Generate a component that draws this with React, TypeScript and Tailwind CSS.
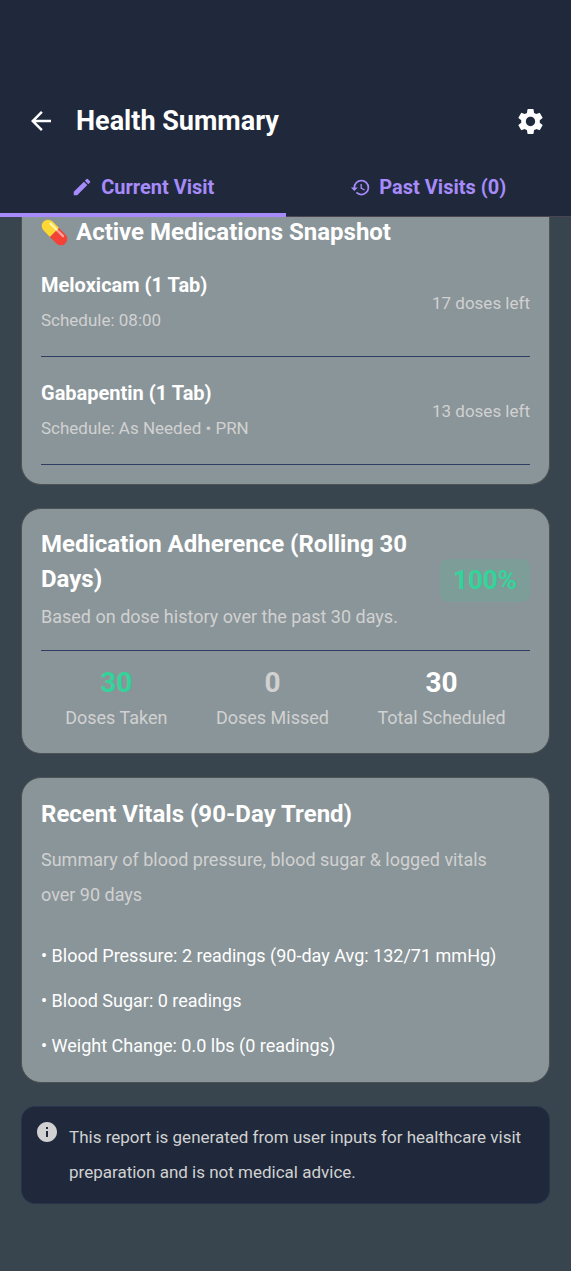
import { MdArrowBack, MdEdit, MdHistory, MdInfo, MdSettings } from "react-icons/md";

const medications = [
   { name: "Meloxicam (1 Tab)", schedule: "Schedule: 08:00", left: "17 doses left" },
   { name: "Gabapentin (1 Tab)", schedule: "Schedule: As Needed • PRN", left: "13 doses left" },
];

const stats = [
   { value: "30", label: "Doses Taken", color: "text-[#34d399]" },
   { value: "0", label: "Doses Missed", color: "text-[#d1d1d1]" },
   { value: "30", label: "Total Scheduled", color: "text-white" },
];

const vitals = [
   "• Blood Pressure: 2 readings (90-day Avg: 132/71 mmHg)",
   "• Blood Sugar: 0 readings",
   "• Weight Change: 0.0 lbs (0 readings)",
];

function PillIcon() {
   return (
      <svg viewBox="0 0 28 28" className="size-[27px] shrink-0" aria-hidden="true">
         <g transform="rotate(45 14 14)">
            <path d="M14 7.4H4.6a6.6 6.6 0 0 0 0 13.2H14z" fill="#fdd835" />
            <path d="M14 7.4h9.4a6.6 6.6 0 0 1 0 13.2H14z" fill="#f44336" />
            <path d="M4.5 10.4h9.5" stroke="#fff3b0" strokeWidth="2.4" strokeLinecap="round" />
            <path d="M15 10.4h8" stroke="#fba59d" strokeWidth="2.4" strokeLinecap="round" />
         </g>
      </svg>
   );
}

function Header() {
   return (
      <header className="bg-[#1f293b] pt-[86px]">
         <div className="flex h-[70px] items-center pl-[26px] pr-[25px]">
            <button type="button" aria-label="Back" className="text-white">
               <MdArrowBack className="size-[30px]" />
            </button>
            <h1 className="ml-5 flex-1 text-[27px] font-bold leading-9 text-white">
               Health Summary
            </h1>
            <button type="button" aria-label="Settings" className="text-white">
               <MdSettings className="size-[31px]" />
            </button>
         </div>
         <div role="tablist" className="flex h-[61px] border-b border-[#4a4453] text-xl font-bold text-[#a78bfa]">
            <button
               type="button"
               role="tab"
               aria-selected="true"
               className="-mb-px flex flex-1 items-center justify-center gap-2 border-b-4 border-[#a78bfa] pt-1"
            >
               <MdEdit className="size-[22px]" />
               Current Visit
            </button>
            <button
               type="button"
               role="tab"
               aria-selected="false"
               className="flex flex-1 items-center justify-center gap-2 pt-0.5"
            >
               <MdHistory className="size-[21px]" />
               Past Visits (0)
            </button>
         </div>
      </header>
   );
}

export default function App() {
   return (
      <div className="min-h-screen bg-[#38454f] font-['Roboto',sans-serif] text-lg leading-[35px] text-[#d1d1d1]">
         <Header />

         <main className="flex flex-col gap-[23px] px-[21px] pb-[67px]">
            <section className="rounded-b-[20px] border border-t-0 border-[#4d5254] bg-[#8a9599] px-[19px] pb-[19px]">
               <h2 className="flex items-center gap-2 text-2xl font-bold leading-[30px] text-white">
                  <PillIcon />
                  Active Medications Snapshot
               </h2>
               <div className="pt-0.5">
                  {medications.map((med) => (
                     <div
                        key={med.name}
                        className="flex items-center justify-between border-b border-[#2f3d62] pb-[18px] pt-[19px]"
                     >
                        <div>
                           <h3 className="text-xl font-bold leading-[35px] text-white">{med.name}</h3>
                           <p className="text-[17px] leading-[35px]">{med.schedule}</p>
                        </div>
                        <span className="text-[17px]">{med.left}</span>
                     </div>
                  ))}
               </div>
            </section>

            <section className="rounded-[20px] border border-[#4d5254] bg-[#8a9599] px-[19px] py-[18px]">
               <div className="flex items-center justify-between gap-6 border-b border-[#2f3d62] pb-4">
                  <div className="flex-1">
                     <h2 className="text-2xl font-bold leading-[35px] text-white">
                        Medication Adherence (Rolling 30 Days)
                     </h2>
                     <p className="mt-0.5">Based on dose history over the past 30 days.</p>
                  </div>
                  <span className="rounded-lg bg-[#34d399]/15 px-[13px] py-1 text-[26px] font-bold text-[#34d399]">
                     100%
                  </span>
               </div>
               <div className="flex justify-around pt-[15px] text-center">
                  {stats.map((stat) => (
                     <div key={stat.label}>
                        <p className={"text-[28px] font-bold leading-[34px] " + stat.color}>{stat.value}</p>
                        <p>{stat.label}</p>
                     </div>
                  ))}
               </div>
            </section>

            <section className="rounded-[20px] border border-[#4d5254] bg-[#8a9599] px-[19px] py-[19px]">
               <h2 className="text-2xl font-bold leading-[35px] text-white">Recent Vitals (90-Day Trend)</h2>
               <p className="mt-[10px] pr-4">
                  Summary of blood pressure, blood sugar & logged vitals over 90 days
               </p>
               <ul className="mt-[26px] flex flex-col gap-[10px] text-white">
                  {vitals.map((line) => (
                     <li key={line}>{line}</li>
                  ))}
               </ul>
            </section>

            <aside className="flex items-start gap-[10px] rounded-[14px] border border-[#26334a] bg-[#1f293b] px-[13px] py-[13px]">
               <MdInfo className="size-6 shrink-0" />
               <p className="text-[17px] leading-[35px]">
                  This report is generated from user inputs for healthcare visit preparation and is not
                  medical advice.
               </p>
            </aside>
         </main>
      </div>
   );
}
